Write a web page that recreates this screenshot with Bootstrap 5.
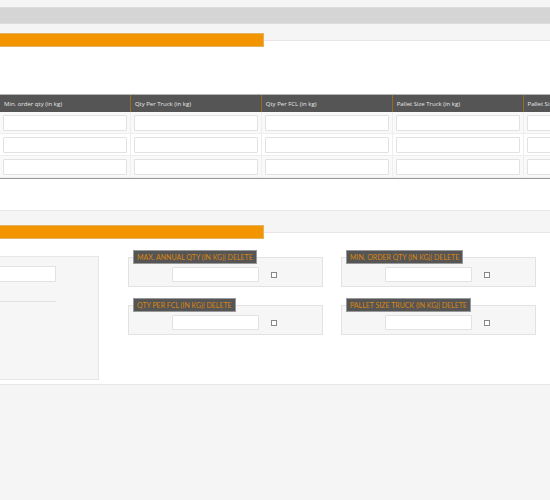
<!DOCTYPE html>
<html lang="en">
<head>
<meta charset="utf-8">
<meta name="viewport" content="width=device-width, initial-scale=1">
<title>Quantities</title>
<link href="https://cdn.jsdelivr.net/npm/bootstrap@5.3.0/dist/css/bootstrap.min.css" rel="stylesheet">
<style>
body { background: #f5f5f5; font-family: Lato, "Open Sans", sans-serif; font-size: 7px; line-height: 10px; }
.topbar { height: 17px; margin: 7px 0 9px; background: #d5d5d5; border: 1px solid #dcdcdc; border-width: 1px 0; }
.section { background: #fff; border: solid #e6e6e6; border-width: 1px 0; }
.section > legend { float: none; width: 48%; height: 14px; margin: 0; background: #f39500; border: 1px solid #e0b262; border-left: 0; }
.first { padding-bottom: 31px; margin-bottom: 14px; }
.second { padding-bottom: 4px; }
.table-wrap { padding-top: 47px; }
.qty-table { width: 119%; table-layout: fixed; border-collapse: separate; border-spacing: 0; border-top: 1px solid #b5b5b5; border-bottom: 1px solid #999; }
.qty-table th { height: 17px; padding: 0 4px; background: #555; color: #e6e6e6; font-family: "Open Sans", sans-serif; font-size: 6px; font-weight: 400; vertical-align: middle; border-right: 1px solid #9a6a22; white-space: nowrap; }
.qty-table td { height: 22px; padding: 3px 3px 2px; border-right: 1px solid #eee; border-bottom: 1px solid #eee; }
.qty-table tbody tr:nth-child(odd) { background: #f9f9f9; }
.field { height: 16px; padding: 0 4px; border: 1px solid #e2e2e2; border-radius: 1px; font-size: 7px; line-height: 10px; }
.panels { padding-top: 17px; }
.side { width: 18%; height: 124px; margin-right: 29px; padding: 9px 42px 0 0; background: #f6f6f6; border: 1px solid #e6e6e6; border-left: 0; }
.side .field { border-left: 0; }
.side hr { margin: 19px 0 0; border-color: #e0e0e0; opacity: 1; }
.groups { grid-template-columns: 1fr 1fr; gap: 11px 18px; padding-right: 14px; margin-top: -6px; }
.group { height: 37px; padding: 0 4px; background: #f6f6f6; border: 1px solid #e2e2e2; }
.group legend { float: none; width: auto; height: 14px; margin: 0 0 3px; padding: 0 3px; background: #555; border: 1px solid #999; color: #d9860f; font-size: 7px; line-height: 12px; white-space: nowrap; }
.group legend a { color: inherit; }
.group .field { width: 47%; height: 15px; margin-left: 39px; }
.group .tick { appearance: none; width: 6px; height: 6px; margin: 0 0 0 12px; background: #fff; border: 1px solid #888; border-radius: 0; }
.group .tick:checked { background: #888; }
</style>
<script src="https://cdn.jsdelivr.net/npm/bootstrap@5.3.0/dist/js/bootstrap.bundle.min.js"></script>
</head>
<body class="overflow-x-hidden">
<header class="topbar"></header>
<main>
  <fieldset class="section first">
    <legend aria-label="Quantities"></legend>
    <div class="table-wrap overflow-hidden">
      <table class="qty-table">
        <thead>
          <tr><th scope="col">Min. order qty (in kg)</th><th scope="col">Qty Per Truck (in kg)</th><th scope="col">Qty Per FCL (in kg)</th><th scope="col">Pallet Size Truck (in kg)</th><th scope="col">Pallet Size FCL (in kg)</th></tr>
        </thead>
        <tbody>
          <tr><td><input class="form-control field" aria-label="Min. order qty, row 1"></td><td><input class="form-control field" aria-label="Qty per truck, row 1"></td><td><input class="form-control field" aria-label="Qty per FCL, row 1"></td><td><input class="form-control field" aria-label="Pallet size truck, row 1"></td><td><input class="form-control field" aria-label="Pallet size FCL, row 1"></td></tr>
          <tr><td><input class="form-control field" aria-label="Min. order qty, row 2"></td><td><input class="form-control field" aria-label="Qty per truck, row 2"></td><td><input class="form-control field" aria-label="Qty per FCL, row 2"></td><td><input class="form-control field" aria-label="Pallet size truck, row 2"></td><td><input class="form-control field" aria-label="Pallet size FCL, row 2"></td></tr>
          <tr><td><input class="form-control field" aria-label="Min. order qty, row 3"></td><td><input class="form-control field" aria-label="Qty per truck, row 3"></td><td><input class="form-control field" aria-label="Qty per FCL, row 3"></td><td><input class="form-control field" aria-label="Pallet size truck, row 3"></td><td><input class="form-control field" aria-label="Pallet size FCL, row 3"></td></tr>
        </tbody>
      </table>
    </div>
  </fieldset>
  <fieldset class="section second">
    <legend aria-label="Units"></legend>
    <div class="panels d-flex">
      <div class="side flex-shrink-0"><input class="form-control field" aria-label="Unit"><hr></div>
      <div class="groups d-grid flex-grow-1 align-content-start">
        <fieldset class="group">
          <legend><label for="q1">MAX. ANNUAL QTY (IN KG)</label>| <a class="text-decoration-none" href="#">DELETE</a></legend>
          <div class="d-flex align-items-center"><input class="form-control field" id="q1"><input class="tick" type="checkbox" aria-label="Select max. annual qty"></div>
        </fieldset>
        <fieldset class="group">
          <legend><label for="q2">MIN. ORDER QTY (IN KG)</label>| <a class="text-decoration-none" href="#">DELETE</a></legend>
          <div class="d-flex align-items-center"><input class="form-control field" id="q2"><input class="tick" type="checkbox" aria-label="Select min. order qty"></div>
        </fieldset>
        <fieldset class="group">
          <legend><label for="q3">QTY PER FCL (IN KG)</label>| <a class="text-decoration-none" href="#">DELETE</a></legend>
          <div class="d-flex align-items-center"><input class="form-control field" id="q3"><input class="tick" type="checkbox" aria-label="Select qty per FCL"></div>
        </fieldset>
        <fieldset class="group">
          <legend><label for="q4">PALLET SIZE TRUCK (IN KG)</label>| <a class="text-decoration-none" href="#">DELETE</a></legend>
          <div class="d-flex align-items-center"><input class="form-control field" id="q4"><input class="tick" type="checkbox" aria-label="Select pallet size truck"></div>
        </fieldset>
      </div>
    </div>
  </fieldset>
</main>
</body>
</html>
